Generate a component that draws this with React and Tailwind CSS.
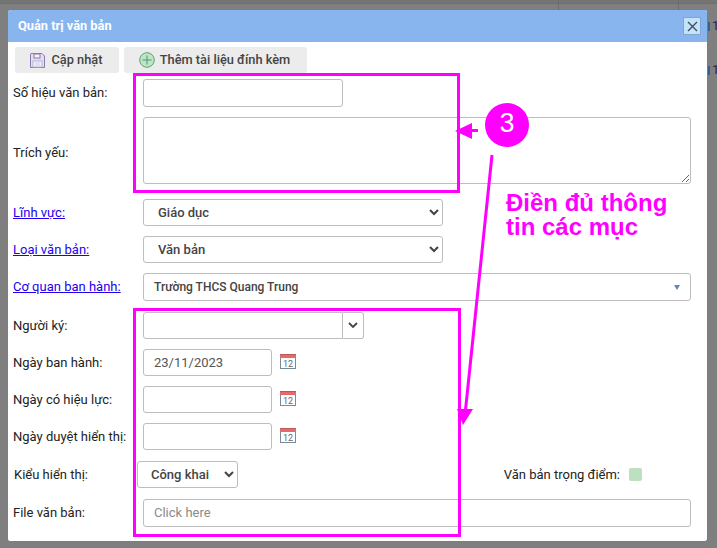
import React from 'react'

const CalendarIcon = () => (
  <svg width="16" height="15" viewBox="0 0 16 15" className="ml-[8px] mt-[-2px] shrink-0">
    <rect x="0.5" y="0.5" width="15" height="14" fill="#ffffff" stroke="#7b8a99" />
    <rect x="0" y="0" width="16" height="1" fill="#b9595c" />
    <rect x="0" y="1" width="16" height="3" fill="#e8686b" />
    <text x="8" y="12.500" textAnchor="middle" fontSize="9" fontFamily="Roboto, sans-serif" fill="#5d6a75">12</text>
  </svg>
)

const SaveIcon = () => (
  <svg width="15" height="15" viewBox="0 0 15 15">
    <path d="M1 .5h11l2.500 2.500v11.500H.5V1z" fill="#e4dff0" stroke="#8c78ad" />
    <rect x="4" y="1" width="6" height="4" fill="#f6f4fa" stroke="#8c78ad" />
    <rect x="3" y="8" width="9" height="6" fill="#ffffff" stroke="#b7abcf" />
    <path d="M4.500 10h6M4.500 12h6" stroke="#a9cbe8" />
  </svg>
)

const PlusIcon = () => (
  <svg width="16" height="16" viewBox="0 0 16 16">
    <circle cx="8" cy="8" r="7.300" fill="#bfe5c8" stroke="#5ba273" />
    <path d="M8 3.500v9M3.500 8h9" stroke="#4f9468" />
  </svg>
)

const Label = ({children, link}) => (
  <div className="w-[130px] shrink-0">
    {link ? <a href="#" className="text-[#2200ee] underline">{children}</a> : children}
  </div>
)

const inputCls = 'border border-[#bdbdbd] rounded-[3px] bg-white'
const selectCls = 'h-[27px] border border-[#bdbdbd] rounded-[3px] bg-white font-medium text-[#444]'

const DateRow = ({label, value}) => (
  <div className="flex items-center mt-[10px]">
    <Label>{label}</Label>
    <div className={`${inputCls} h-[27px] w-[129px] pl-[10px] text-[#555] leading-[25px]`}>{value}</div>
    <CalendarIcon />
  </div>
)

export default function App() {
  return (
    <div className="relative w-[717px] h-[548px] overflow-hidden bg-[#7f7f7f] pl-[8px] pt-[10px] font-['Roboto',sans-serif] text-[13px] text-[#222]">
      {/* page behind the dialog */}
      <div className="absolute left-0 top-0 w-full h-[4px] bg-[#747474] border-b border-[#6e6e6e]" />
      <div className="absolute left-[558px] top-0 w-px h-[10px] bg-[#6b6b6b]" />
      <div className="absolute left-[678px] top-0 w-px h-[10px] bg-[#6b6b6b]" />
      <div className="absolute left-[708px] top-[22px] w-[2px] h-[9px] bg-[#34628c]" />
      <div className="absolute left-[708px] top-[66px] w-[2px] h-[9px] bg-[#34628c]" />
      <div className="absolute left-[712px] top-[18px] leading-[16px] text-[#3a1a4a]">1</div>
      <div className="absolute left-[712px] top-[62px] leading-[16px] text-[#3a1a4a]">1</div>

      <div className="relative w-[700px] h-[532px] bg-white rounded-[3px] border-r border-b border-[#5b84ad] overflow-hidden">
        <div className="flex items-center justify-between h-[32px] bg-[#89b5ee] pl-[10px] pr-[6px]">
          <span className="font-bold text-[12.800px] text-white">Quản trị văn bản</span>
          <button className="flex items-center justify-center w-[18px] h-[18px] bg-[#c4e3fa] border border-[#7fa6cf]">
            <svg width="11" height="11" viewBox="0 0 11 11">
              <path d="M1 1l9 9M10 1l-9 9" stroke="#3f4d5c" strokeWidth="1.400" />
            </svg>
          </button>
        </div>

        <div className="pl-[5px] pr-[16px] pt-[5px]">
          <div className="flex gap-[5px] pl-[2px] font-medium text-[12.800px] text-[#444]">
            <button className="flex items-center justify-center gap-[6px] w-[104px] h-[26px] pr-[1px] bg-[#ececec] rounded-[3px]">
              <SaveIcon />
              <span>Cập nhật</span>
            </button>
            <button className="flex items-center justify-center gap-[5px] w-[183px] h-[26px] pr-[2px] bg-[#ececec] rounded-[3px]">
              <PlusIcon />
              <span>Thêm tài liệu đính kèm</span>
            </button>
          </div>

          <div className="flex items-center mt-[6px]">
            <Label>Số hiệu văn bản:</Label>
            <div className={`${inputCls} h-[28px] w-[200px]`} />
          </div>
          <div className="flex items-center mt-[10px]">
            <div className="w-[130px] shrink-0 pt-[4px]">Trích yếu:</div>
            <textarea className="flex-1 h-[67px] border border-[#bdbdbd] rounded-[3px] bg-white" />
          </div>
          <div className="flex items-center mt-[15px]">
            <Label link>Lĩnh vực:</Label>
            <select defaultValue="Giáo dục" className={`${selectCls} w-[300px] pl-[10px]`}>
              <option>Giáo dục</option>
            </select>
          </div>
          <div className="flex items-center mt-[10px]">
            <Label link>Loại văn bản:</Label>
            <select defaultValue="Văn bản" className={`${selectCls} w-[300px] pl-[10px]`}>
              <option>Văn bản</option>
            </select>
          </div>
          <div className="flex items-center mt-[10px]">
            <Label link>Cơ quan ban hành:</Label>
            <div className={`${inputCls} h-[28px] flex-1 flex items-center justify-between pl-[10px] pr-[10px] text-[#444]`}>
              <span className="text-[12px] font-medium">Trường THCS Quang Trung</span>
              <svg width="6" height="5" viewBox="0 0 6 5"><path d="M0 0h6L3 5z" fill="#5f87c0" /></svg>
            </div>
          </div>
          <div className="flex items-center mt-[11px]">
            <Label>Người ký:</Label>
            <div className={`${inputCls} h-[27px] w-[200px] rounded-r-none`} />
            <div className={`${inputCls} h-[27px] w-[21px] border-l-0 rounded-l-none flex items-center justify-center`}>
              <svg width="10" height="7" viewBox="0 0 10 7"><path d="M1 1l4 4 4-4" fill="none" stroke="#444" strokeWidth="1.800" /></svg>
            </div>
          </div>
          <DateRow label="Ngày ban hành:" value="23/11/2023" />
          <DateRow label="Ngày có hiệu lực:" />
          <DateRow label="Ngày duyệt hiển thị:" />
          <div className="flex items-center mt-[11px]">
            <div className="w-[124px] pl-px shrink-0">Kiểu hiển thị:</div>
            <select defaultValue="Công khai" className={`${selectCls} w-[101px] pl-[9px]`}>
              <option>Công khai</option>
            </select>
            <div className="ml-auto mr-[49px] flex items-center gap-[9px]">
              <span>Văn bản trọng điểm:</span>
              <div className="w-[13px] h-[13px] rounded-[2px] bg-[#bde0bf]" />
            </div>
          </div>
          <div className="flex items-center mt-[11px]">
            <Label>File văn bản:</Label>
            <div className={`${inputCls} h-[28px] flex-1 pl-[10px] text-[#8a8a8a] leading-[26px]`}>Click here</div>
          </div>
        </div>
      </div>

      {/* annotations drawn on top of the form */}
      <div className="absolute left-[133px] top-[73px] w-[327px] h-[120px] border-[3px] border-[#ff00ff]" />
      <div className="absolute left-[133px] top-[308px] w-[328px] h-[229px] border-[3px] border-[#ff00ff]" />
      <div className="absolute left-[485px] top-[103px] w-[44px] h-[44px] pb-[3px] rounded-full bg-[#ff00ff] flex items-center justify-center text-white text-[27px] font-['Liberation_Sans',sans-serif]">3</div>
      <svg width="717" height="548" className="absolute left-0 top-0 pointer-events-none">
        <path d="M478 130.500h-14" stroke="#ff00ff" strokeWidth="3" />
        <path d="M455 131l17-8v16z" fill="#ff00ff" />
        <path d="M492 155L465.500 410" stroke="#ff00ff" strokeWidth="3" />
        <path d="M457 409h16l-10 16z" fill="#ff00ff" />
      </svg>
      <div className="absolute left-[506px] top-[191px] text-[#ff00ff] font-bold text-[24px] leading-[24px] font-['Liberation_Sans',sans-serif]">
        Điền đủ thông<br />tin các mục
      </div>
    </div>
  )
}
